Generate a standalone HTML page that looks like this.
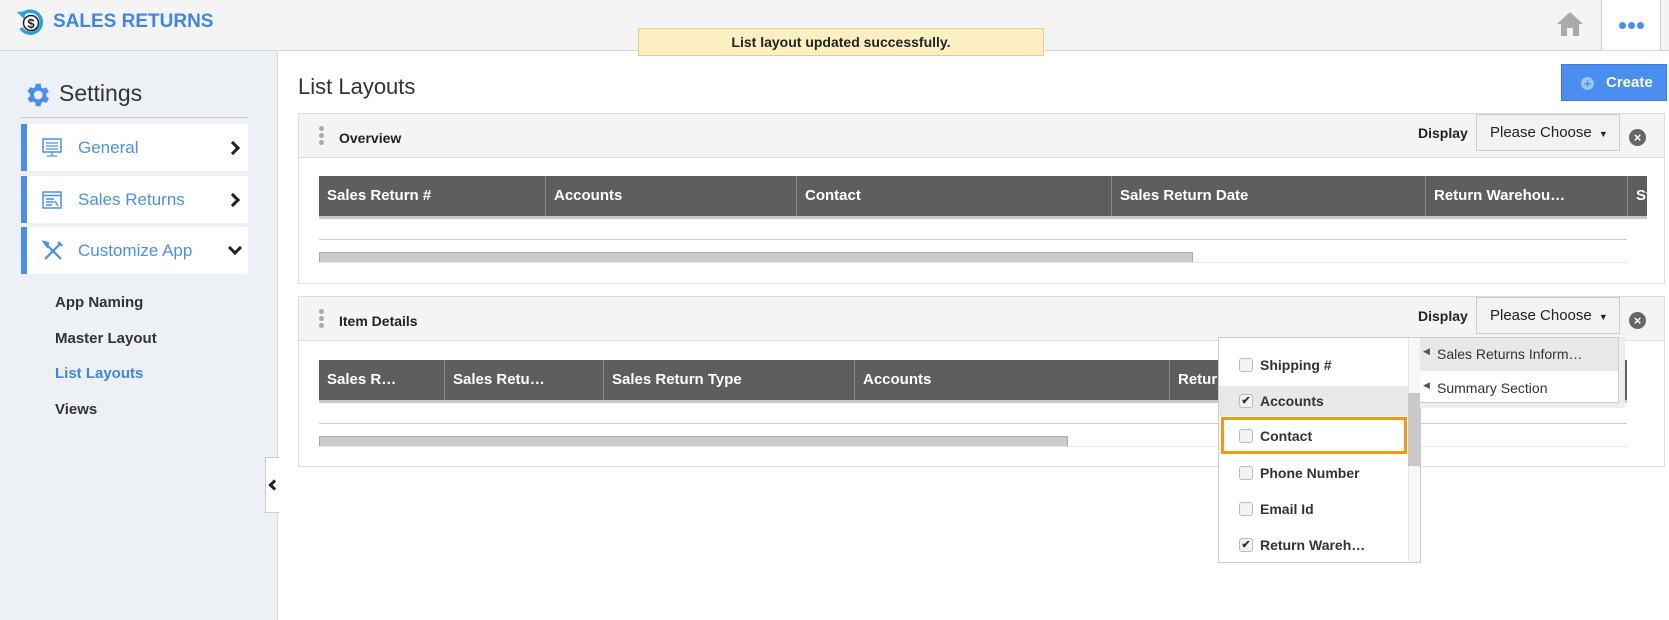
<!DOCTYPE html>
<html><head><style>
*{box-sizing:border-box;margin:0;padding:0}
body{width:1669px;height:620px;overflow:hidden;font-family:"Liberation Sans",Arial,sans-serif;background:#fff;position:relative;color:#333}
.a{position:absolute}
.hdr{left:0;top:0;width:1669px;height:51px;background:#f4f4f4;border-bottom:1px solid #d4d4d4}
.side{left:0;top:51px;width:278px;height:569px;background:#edf0f5;border-right:1px solid #d8d8d8}
.item{left:21px;width:227px;height:47px;background:#fff;border-left:6px solid #4a8ef0;font-size:17px;color:#4a8ef0}
.item span{position:absolute;left:51px;top:14px}
.item .chev{position:absolute;right:10px;top:19px;width:10px;height:10px;border-right:3px solid #222;border-bottom:3px solid #222;transform:rotate(-45deg)}
.sub{left:55px;font-size:15px;font-weight:bold;color:#333}
.panel{left:298px;width:1367px;border:1px solid #ddd;background:#fff;overflow:hidden}
.ph{position:absolute;left:0;top:0;right:0;height:44px;background:#f4f4f4;border-bottom:1px solid #ddd}
.th{position:absolute;height:43px;background:#5e5e5e;border-bottom:3px solid #c8c8c8;color:#fff;font-weight:bold;font-size:15px}
.th div{position:absolute;top:0;height:40px;line-height:40px;padding-left:8px;border-left:1px solid #888;white-space:nowrap;overflow:hidden}
.sel{width:144px;height:37px;border:1px solid #ccc;background:#f2f2f2;font-size:15px;line-height:35px;padding-left:13px;color:#222}
.cb{position:absolute;left:20px;width:14px;height:14px;border:1px solid #bbb;border-radius:3px;background:#f3f3f3;font-size:11px;line-height:12px;text-align:center;color:#333}
.dr{position:absolute;left:0;width:189px;height:34px;font-size:14px;font-weight:bold;color:#333}
.dr span{position:absolute;left:41px;top:9px}
.dots{position:absolute;left:20px;top:12px;width:5px}
.dots i{display:block;width:5px;height:5px;border-radius:50%;background:#aaa;margin-bottom:2px}
</style></head><body>
<div class="a hdr"></div>
<svg class="a" style="left:16px;top:7px" width="30" height="30" viewBox="0 0 30 30"><path d="M7 7 A11 11 0 1 1 5 21" fill="none" stroke="#29a3e0" stroke-width="3.5"/><path d="M1 5 L10 4 L8 12 Z" fill="#29a3e0"/><circle cx="15" cy="16" r="7.5" fill="#fff" stroke="#222" stroke-width="1.5"/><text x="15" y="21" font-size="13" font-weight="bold" text-anchor="middle" fill="#222" font-family="Liberation Sans">$</text></svg>
<div class="a" style="left:53px;top:11px;font-size:19px;font-weight:bold;color:#3b86e8">SALES RETURNS</div>
<svg class="a" style="left:1556px;top:11px" width="28" height="26" viewBox="0 0 28 26"><path d="M14 1 L27 13 L23 13 L23 25 L17 25 L17 17 L11 17 L11 25 L5 25 L5 13 L1 13 Z" fill="#aaa"/></svg>
<div class="a" style="left:1601px;top:0;width:60px;height:50px;background:#fff;border-left:1px solid #ccc;border-right:1px solid #ccc"></div>
<div class="a" style="left:1619px;top:22px;height:7px;line-height:0"><span style="display:inline-block;width:7px;height:7px;border-radius:50%;background:#4a8ef0;margin-right:2px"></span><span style="display:inline-block;width:7px;height:7px;border-radius:50%;background:#4a8ef0;margin-right:2px"></span><span style="display:inline-block;width:7px;height:7px;border-radius:50%;background:#4a8ef0"></span></div>
<div class="a" style="left:638px;top:28px;width:406px;height:28px;background:#fcf0c3;border:1px solid #e8cf80;font-size:14px;font-weight:bold;text-align:center;line-height:26px;color:#222">List layout updated successfully.</div>

<div class="a side"></div>
<svg class="a" style="left:22px;top:80px" width="30" height="30" viewBox="0 0 24 24"><path fill="#4a8ef0" d="M19.4 13a7.5 7.5 0 0 0 0-2l2.1-1.6-2-3.5-2.5 1a7 7 0 0 0-1.7-1L15 3h-4l-.4 2.7a7 7 0 0 0-1.7 1l-2.5-1-2 3.5L6.5 11a7.5 7.5 0 0 0 0 2l-2.1 1.6 2 3.5 2.5-1a7 7 0 0 0 1.7 1L11 21h4l.4-2.7a7 7 0 0 0 1.7-1l2.5 1 2-3.5zM13 15.5a3.5 3.5 0 1 1 0-7 3.5 3.5 0 0 1 0 7z"/></svg>
<div class="a" style="left:59px;top:80px;font-size:23px;color:#333">Settings</div>
<div class="a" style="left:21px;top:117px;width:227px;height:1px;background:#c8c8c8"></div>
<div class="a item" style="top:124px"><svg class="a" style="left:15px;top:14px" width="20" height="20" viewBox="0 0 20 20"><rect x="1" y="1" width="18" height="13" fill="none" stroke="#4a8ef0" stroke-width="1.5"/><path d="M4 5h12M4 8h12M4 11h12M10 14v4M5 18h10" stroke="#4a8ef0" stroke-width="1.3"/></svg><span>General</span><b class="chev"></b></div>
<div class="a item" style="top:176px"><svg class="a" style="left:15px;top:14px" width="20" height="20" viewBox="0 0 20 20"><rect x="1" y="2" width="18" height="16" fill="none" stroke="#4a8ef0" stroke-width="1.5"/><path d="M1 5.5h18M4 9h8M4 12h8M4 15h6M13 11l3 5" stroke="#4a8ef0" stroke-width="1.4"/></svg><span>Sales Returns</span><b class="chev"></b></div>
<div class="a item" style="top:227px"><svg class="a" style="left:15px;top:13px" width="22" height="22" viewBox="0 0 22 22"><path d="M3 3l16 16M19 3L3 19M2 2l4 1-1 3zM16 2l4 4" stroke="#4a8ef0" stroke-width="2.2" fill="none"/></svg><span>Customize App</span><b class="chev" style="transform:rotate(45deg);top:16px;right:8px"></b></div>
<div class="a sub" style="top:294px">App Naming</div>
<div class="a sub" style="top:330px">Master Layout</div>
<div class="a sub" style="top:365px;color:#3b86e8">List Layouts</div>
<div class="a sub" style="top:401px">Views</div>
<div class="a" style="left:265px;top:457px;width:14px;height:56px;background:#fff;border:1px solid #ccc;border-right:none"><div style="position:absolute;left:4px;top:23px;width:8px;height:8px;border-left:3px solid #222;border-bottom:3px solid #222;transform:rotate(45deg)"></div></div>

<div class="a" style="left:298px;top:74px;font-size:22px;color:#333">List Layouts</div>
<div class="a" style="left:1561px;top:64px;width:106px;height:37px;background:#4a8ef0;border:1px solid #3a7de0;color:#fff;font-weight:bold;font-size:15px;line-height:35px;padding-left:19px"><span style="display:inline-block;width:13px;height:13px;border-radius:50%;background:#9ec3f7;color:#4a8ef0;font-size:13px;line-height:13px;text-align:center;vertical-align:-1px;margin-right:12px">+</span>Create</div>

<div class="a panel" style="top:113px;height:171px">
 <div class="ph"><div class="dots"><i></i><i></i><i></i></div><div class="a" style="left:40px;top:16px;font-size:14px;font-weight:bold;color:#222">Overview</div>
 <div class="a" style="left:1119px;top:11px;font-size:14px;font-weight:bold;color:#222">Display</div>
 <div class="a sel" style="left:1177px;top:0">Please Choose <span style="font-size:9px;margin-left:3px">&#x25BC;</span></div>
 <div class="a" style="left:1330px;top:15px;width:17px;height:17px;border-radius:50%;background:#666;color:#fff;font-size:13px;font-weight:bold;line-height:17px;text-align:center">×</div></div>
 <div class="th" style="left:20px;top:62px;width:1328px"><div style="left:0;border:none;width:226px">Sales Return #</div><div style="left:226px;width:251px">Accounts</div><div style="left:477px;width:315px">Contact</div><div style="left:792px;width:314px">Sales Return Date</div><div style="left:1106px;width:202px">Return Warehou…</div><div style="left:1308px;width:20px">St</div></div>
 <div class="a" style="left:20px;top:125px;width:1308px;height:1px;background:#ccc"></div>
 <div class="a" style="left:20px;top:138px;width:874px;height:11px;background:#ccc;border:1px solid #aaa"></div>
 <div class="a" style="left:20px;top:148px;width:1308px;height:1px;background:#e5e5e5"></div>
</div>

<div class="a panel" style="top:296px;height:171px">
 <div class="ph"><div class="dots"><i></i><i></i><i></i></div><div class="a" style="left:40px;top:16px;font-size:14px;font-weight:bold;color:#222">Item Details</div>
 <div class="a" style="left:1119px;top:11px;font-size:14px;font-weight:bold;color:#222">Display</div>
 <div class="a sel" style="left:1177px;top:0">Please Choose <span style="font-size:9px;margin-left:3px">&#x25BC;</span></div>
 <div class="a" style="left:1330px;top:15px;width:17px;height:17px;border-radius:50%;background:#666;color:#fff;font-size:13px;font-weight:bold;line-height:17px;text-align:center">×</div></div>
 <div class="th" style="left:20px;top:63px;width:1308px"><div style="left:0;border:none;width:125px">Sales R…</div><div style="left:125px;width:159px">Sales Retu…</div><div style="left:284px;width:251px">Sales Return Type</div><div style="left:535px;width:315px">Accounts</div><div style="left:850px;width:300px">Return</div></div>
 <div class="a" style="left:20px;top:126px;width:1308px;height:1px;background:#ccc"></div>
 <div class="a" style="left:20px;top:139px;width:749px;height:11px;background:#ccc;border:1px solid #aaa"></div>
 <div class="a" style="left:20px;top:149px;width:1308px;height:1px;background:#e5e5e5"></div>
</div>

<div class="a" style="left:1218px;top:337px;width:203px;height:226px;background:#fff;border:1px solid #ccc;overflow:hidden">
 <div class="dr" style="top:10px"><div class="cb" style="top:10px"></div><span>Shipping #</span></div>
 <div class="dr" style="top:48px;height:30px;background:#e8e8e8"><div class="cb" style="top:8px">✔</div><span style="top:7px">Accounts</span></div>
 <div class="dr" style="top:79px;height:37px;border:3px solid #f7960f;left:2px;width:186px"><div class="cb" style="top:9px;left:15px"></div><span style="top:8px;left:36px">Contact</span></div>
 <div class="dr" style="top:118px"><div class="cb" style="top:10px"></div><span>Phone Number</span></div>
 <div class="dr" style="top:154px"><div class="cb" style="top:10px"></div><span>Email Id</span></div>
 <div class="dr" style="top:190px"><div class="cb" style="top:10px">✔</div><span>Return Wareh…</span></div>
 <div class="a" style="left:189px;top:0;width:13px;height:226px;background:#f7f7f7;border-left:1px solid #e5e5e5"></div>
 <div class="a" style="left:189px;top:55px;width:12px;height:73px;background:#c9c9c9"></div>
</div>
<div class="a" style="left:1420px;top:337px;width:205px;height:71px;background:#eee"></div>
<div class="a" style="left:1420px;top:337px;width:199px;height:66px;background:#fff;border:1px solid #ccc;border-left:none;font-size:14px;color:#333">
 <div class="a" style="left:0;top:0;width:198px;height:33px;background:#e8e8e8"></div>
 <div class="a" style="left:3px;top:8px;font-size:9px;color:#555">◀</div><div class="a" style="left:17px;top:8px">Sales Returns Inform…</div>
 <div class="a" style="left:3px;top:42px;font-size:9px;color:#555">◀</div><div class="a" style="left:17px;top:42px">Summary Section</div>
</div>
</body></html>
